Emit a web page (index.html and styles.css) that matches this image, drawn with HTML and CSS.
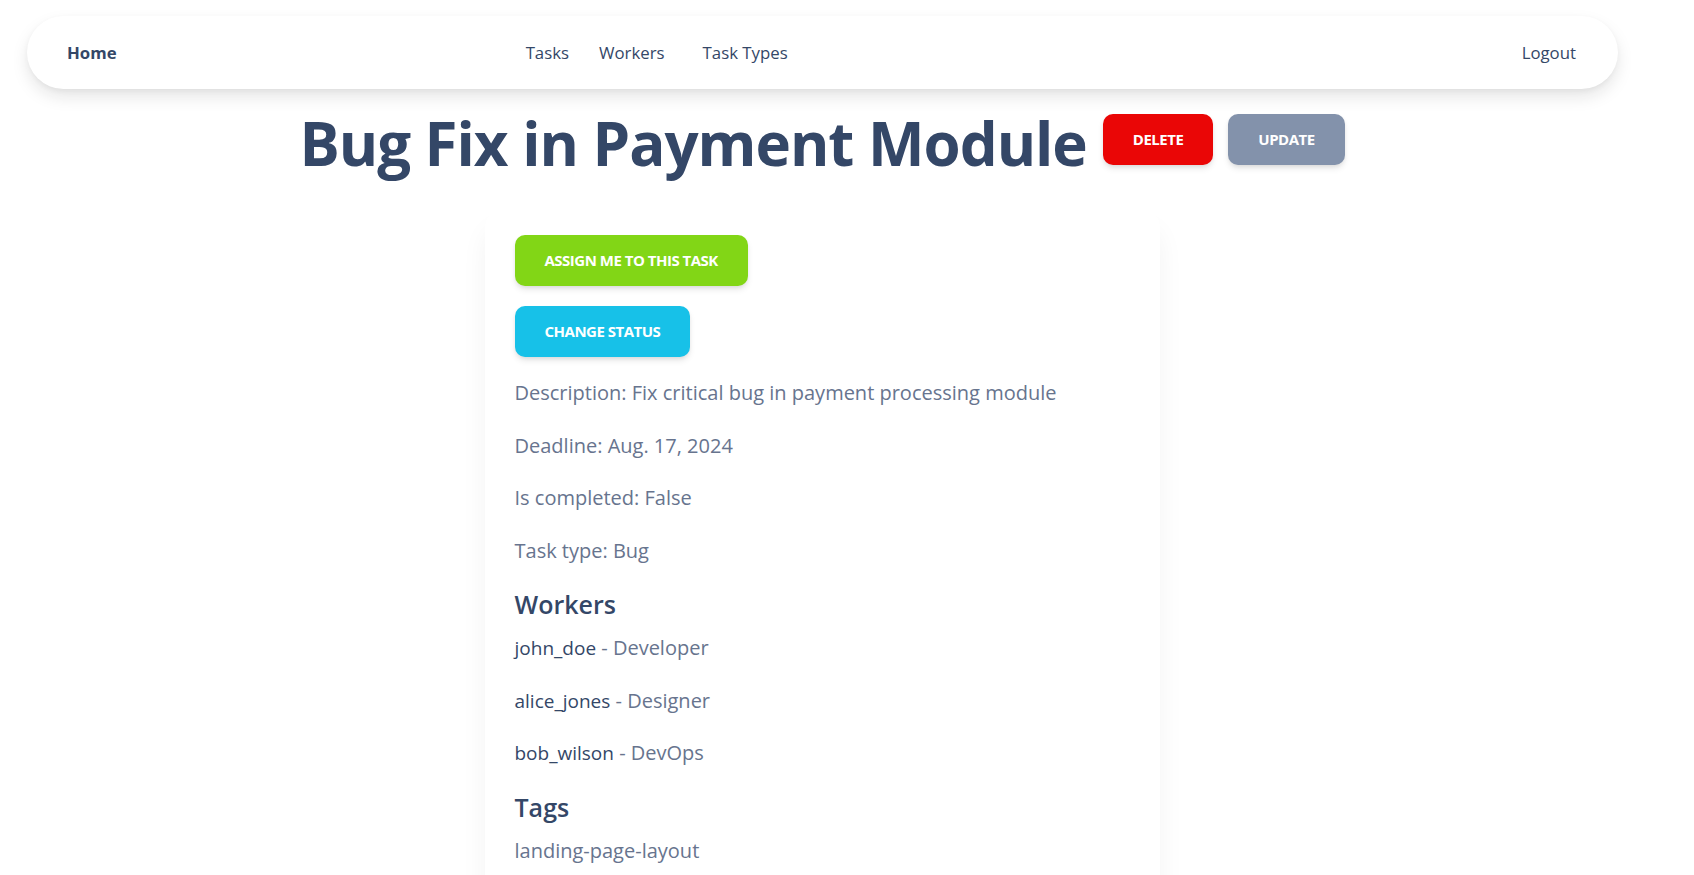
FILE: index.html
```html
<!DOCTYPE html>
<html lang="en">
<head>
<meta charset="utf-8">
<title>Bug Fix in Payment Module</title>
<link rel="stylesheet" href="styles.css">
</head>
<body>
<div class="page">
  <nav class="navbar">
    <a class="brand" href="#">Home</a>
    <ul class="nav-links">
      <li><a href="#" class="nav-tasks">Tasks</a></li>
      <li><a href="#" class="nav-workers">Workers</a></li>
      <li><a href="#" class="nav-types">Task Types</a></li>
    </ul>
    <a class="logout" href="#">Logout</a>
  </nav>

  <header class="title-row">
    <h1 class="title">Bug Fix in Payment Module</h1>
    <a href="#" class="btn btn-danger">Delete</a>
    <a href="#" class="btn btn-secondary">Update</a>
  </header>

  <section class="card">
    <div class="actions">
      <a href="#" class="btn btn-success">Assign me to this task</a>
      <a href="#" class="btn btn-info">Change status</a>
    </div>
    <p>Description: Fix critical bug in payment processing module</p>
    <p>Deadline: Aug. 17, 2024</p>
    <p>Is completed: False</p>
    <p>Task type: Bug</p>
    <h5>Workers</h5>
    <p><a href="#" class="worker">john_doe</a> - Developer</p>
    <p><a href="#" class="worker">alice_jones</a> - Designer</p>
    <p><a href="#" class="worker">bob_wilson</a> - DevOps</p>
    <h5>Tags</h5>
    <p>landing-page-layout</p>
  </section>
</div>
</body>
</html>
```

FILE: styles.css
```css
* { box-sizing: border-box; }

html, body {
  margin: 0;
  padding: 0;
  background: #ffffff;
}

body {
  font-family: "Open Sans", "DejaVu Sans", sans-serif;
  font-size: 20px;
  line-height: 1.625;
  color: #67748e;
  overflow: hidden;
}

a { text-decoration: none; }

.page {
  width: 1644px;
  padding-top: 16px;
}

/* Navbar */
.navbar {
  margin: 0 26px 0 27px;
  height: 73px;
  background: #ffffff;
  border-radius: 40px;
  box-shadow: 0 8px 18px -2px rgba(20, 20, 20, 0.13), 0 2px 6px -1px rgba(20, 20, 20, 0.05);
  display: flex;
  align-items: center;
  padding: 1px 42px 0 40px;
  font-size: 16.8px;
  color: #344767;
}

.brand {
  color: #344767;
  font-weight: 700;
}

.nav-links {
  list-style: none;
  margin: 0 0 0 409px;
  padding: 0;
  display: flex;
}

.nav-links a {
  color: #344767;
  font-weight: 400;
}

.nav-workers { margin-left: 30px; }
.nav-types { margin-left: 38px; }

.logout {
  margin-left: auto;
  color: #344767;
}

/* Title */
.title-row {
  display: flex;
  justify-content: center;
  align-items: flex-start;
  margin-top: 18px;
}

.title {
  margin: 0;
  font-size: 60px;
  line-height: 72px;
  font-weight: 700;
  color: #344767;
  letter-spacing: -1px;
}

.btn {
  display: inline-block;
  padding: 15px 30px;
  font-size: 15px;
  line-height: 21px;
  font-weight: 700;
  text-transform: uppercase;
  letter-spacing: -0.5px;
  color: #ffffff;
  border-radius: 10px;
  box-shadow: 0 4px 7px -1px rgba(0, 0, 0, 0.11), 0 2px 4px -1px rgba(0, 0, 0, 0.07);
  white-space: nowrap;
}

.title-row .btn { margin-top: 7px; }
.btn-danger { background: #ea0606; margin-left: 16px; }
.btn-secondary { background: #8392ab; margin-left: 15px; }
.btn-success { background: #82d616; }
.btn-info { background: #17c1e8; }

/* Card */
.card {
  width: 675px;
  margin: 29px auto 0;
  padding: 27px 30px 30px;
  background: #ffffff;
  border-radius: 20px;
  box-shadow: 0 20px 27px 0 rgba(0, 0, 0, 0.05);
}

.actions {
  display: flex;
  flex-direction: column;
  align-items: flex-start;
  gap: 20px;
  margin-bottom: 20px;
}

.card p {
  margin: 0 0 20px;
}

.card h5 {
  margin: 1px 0 11px;
  font-size: 25px;
  line-height: 1.375;
  font-weight: 600;
  color: #344767;
}

.worker {
  color: #344767;
  font-size: 19px;
}
```
